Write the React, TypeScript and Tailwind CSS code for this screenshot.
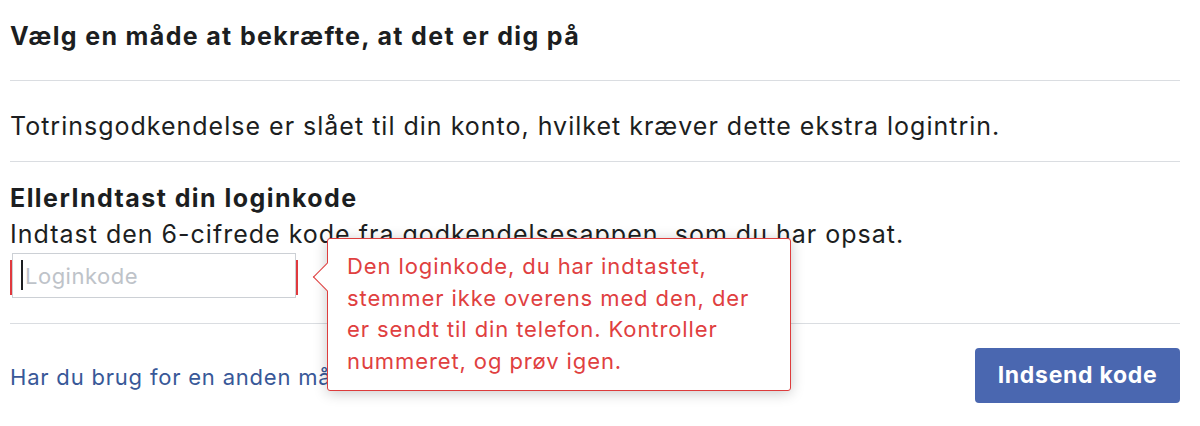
import React from 'react';

export default function App() {
  return (
    <div className="relative h-[426px] w-[1200px] overflow-hidden bg-white font-['Inter',sans-serif] text-[#1c1e21]">
      <div className="ml-[10px] w-[1170px]">
        {/* Title */}
        <div className="pt-[21px] pb-[29px]">
          <h2 className="text-[25px] font-bold leading-[30px] tracking-[1.35px]">
            Vælg en måde at bekræfte, at det er dig på
          </h2>
        </div>

        <div className="border-t border-[#dadde1] pt-[30px] pb-[20px]">
          <p className="text-[25px] leading-[30px] tracking-[1px]">
            Totrinsgodkendelse er slået til din konto, hvilket kræver dette ekstra logintrin.
          </p>
        </div>

        <div className="border-t border-[#dadde1] pt-[21px] pb-[25px]">
          <h3 className="text-[25px] font-bold leading-[30px] tracking-[1.45px]">EllerIndtast din loginkode</h3>
          <p className="mt-[6px] text-[25px] leading-[30px] tracking-[1px]">
            Indtast den 6-cifrede kode fra godkendelsesappen, som du har opsat.
          </p>
          <div className="relative mt-[4px] ml-[2px] w-[284px]">
            <span className="absolute left-[-2px] top-[7px] h-[35px] w-[2px] bg-[#e0393e]" />
            <input
              className="h-[45px] w-full border border-[#ccd0d5] bg-white pl-[12px] text-[22px] tracking-[0.5px] text-[#1c1e21] placeholder:text-[#bec3c9] outline-none"
              placeholder="Loginkode"
            />
            <span className="absolute left-[9px] top-[7px] h-[30px] w-[2px] bg-[#1c1e21]" />
            <span className="absolute right-[-2px] top-[7px] h-[35px] w-[2px] bg-[#e0393e]" />
          </div>
        </div>

        <div className="flex items-center justify-between border-t border-[#dadde1] pt-[24px]">
          <a href="#" className="pt-[3px] text-[22px] leading-[30px] tracking-[0.8px] text-[#385898]">
            Har du brug for en anden måde at bekræfte, at det er dig?
          </a>
          <button className="h-[55px] w-[205px] rounded-[4px] bg-[#4a67b0] text-[23px] font-bold tracking-[0.7px] text-white">
            Indsend kode
          </button>
        </div>
      </div>

      {/* Error tooltip */}
      <div className="absolute left-[327px] top-[238px] w-[464px] rounded-[3px] border border-[#dd3c3c] bg-white px-[19px] pt-[12px] pb-[13px] text-[22px] leading-[31.6px] tracking-[0.9px] text-[#e0403f] shadow-[0_2px_14px_rgba(0,0,0,0.22)]">
        <span className="absolute left-[-11px] top-[28px] h-[20px] w-[20px] rotate-45 border-b border-l border-[#dd3c3c] bg-white" />
        <p className="relative">
          Den loginkode, du har indtastet,
          <br />
          stemmer ikke overens med den, der
          <br />
          er sendt til din telefon. Kontroller
          <br />
          nummeret, og prøv igen.
        </p>
      </div>
    </div>
  );
}
